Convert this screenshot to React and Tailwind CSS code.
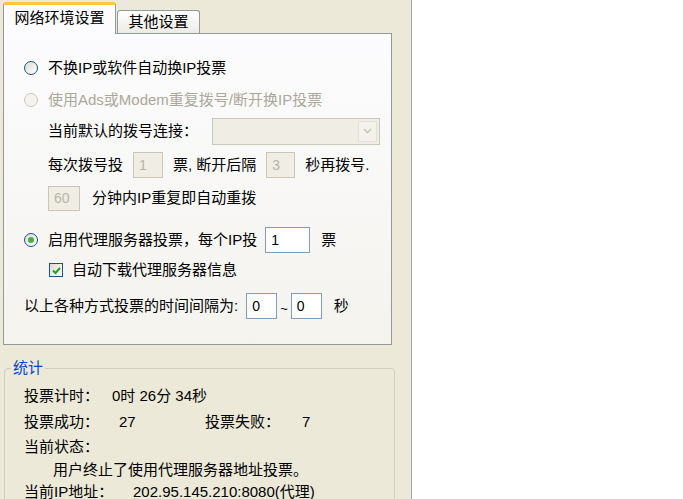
import React from "react";

const font = { fontFamily: '"Liberation Sans", "Noto Sans CJK SC", sans-serif' };

const Radio = ({ checked, disabled }) => (
  <span
    className={`relative inline-block w-[14px] h-[14px] rounded-full border shrink-0 ${
      disabled
        ? "border-[#CAC8BB] bg-[#F4F3EE]"
        : "border-[#1C5180] bg-gradient-to-br from-[#DCDBD3] to-[#FFFFFF]"
    }`}
  >
    {checked && (
      <span className="absolute left-[3px] top-[3px] w-[6px] h-[6px] rounded-full bg-[#4DA94D]" />
    )}
  </span>
);

const Check = () => (
  <span className="inline-flex items-center justify-center w-[14px] h-[14px] border border-[#1C5180] bg-gradient-to-br from-[#DCDBD3] to-[#FFFFFF] shrink-0">
    <svg width="9" height="9" viewBox="0 0 9 9">
      <path d="M1 4.5 L3.5 7 L8 2" stroke="#21A121" strokeWidth="2" fill="none" />
    </svg>
  </span>
);

const Box = ({ value, w, h = 26, disabled }) => (
  <span
    className={`inline-flex items-center pl-[5px] border text-[14px] leading-none ${
      disabled
        ? "border-[#C9C7BA] bg-[#EFEDE4] text-[#B8B6A8]"
        : "border-[#7F9DB9] bg-white text-black"
    }`}
    style={{ width: w, height: h }}
  >
    {value}
  </span>
);

export default function App() {
  return (
    <div className="flex w-[683px] h-[499px] bg-white overflow-hidden text-[15px] text-black" style={font}>
      <div className="relative w-[412px] h-[499px] bg-[#ECE9D8] border-r border-[#A5A5A5] shrink-0">
        {/* tabs */}
        <div className="flex h-[33px] items-end pl-[3px]">
          <div className="relative z-10 w-[113px] h-[32px] bg-[#FCFCFE] border border-b-0 border-[#919B9C] rounded-t-[3px] border-t-[3px] border-t-[#FFC83C] flex items-center justify-center -mb-px">
            <span className="text-[15px] pb-[2px]">网络环境设置</span>
          </div>
          <div className="w-[83px] h-[23px] ml-[1px] bg-gradient-to-b from-[#FFFFFF] to-[#ECEBE6] border border-b-0 border-[#919B9C] rounded-t-[3px] flex items-center justify-center">
            <span className="text-[15px]">其他设置</span>
          </div>
        </div>

        {/* tab page */}
        <div className="ml-[3px] w-[389px] h-[312px] border border-[#919B9C] bg-gradient-to-b from-[#FCFCFE] to-[#F4F3EE] flex flex-col">
          <div className="mt-[19px] h-[30px] flex items-center pl-[20px]">
            <Radio />
            <span className="ml-[10px]">不换IP或软件自动换IP投票</span>
          </div>
          <div className="mt-[2px] h-[30px] flex items-center pl-[20px] text-[#ACA899]">
            <Radio disabled />
            <span className="ml-[10px]">使用Ads或Modem重复拨号/断开换IP投票</span>
          </div>
          <div className="mt-[2px] h-[28px] flex items-center pl-[44px]">
            <span className="w-[164px]">当前默认的拨号连接：</span>
            <span className="flex w-[168px] h-[27px] border border-[#C9C7BA] bg-[#EFEDE4] items-center justify-end pr-[2px]">
              <span className="w-[19px] h-[21px] border border-[#E3E1D6] bg-[#F3F2EC] flex items-center justify-center">
                <svg width="9" height="6" viewBox="0 0 9 6">
                  <path d="M1 1 L4.5 4.5 L8 1" stroke="#C9C7BA" strokeWidth="1.6" fill="none" />
                </svg>
              </span>
            </span>
          </div>
          <div className="mt-[6px] h-[28px] flex items-center pl-[44px]">
            <span>每次拨号投</span>
            <span className="ml-[10px]"><Box value="1" w={30} disabled /></span>
            <span className="ml-[10px]">票, 断开后隔</span>
            <span className="ml-[10px]"><Box value="3" w={29} disabled /></span>
            <span className="ml-[10px]">秒再拨号.</span>
          </div>
          <div className="mt-[6px] h-[26px] flex items-center pl-[44px]">
            <Box value="60" w={32} h={25} disabled />
            <span className="ml-[12px]">分钟内IP重复即自动重拨</span>
          </div>
          <div className="mt-[15px] h-[28px] flex items-center pl-[20px]">
            <Radio checked />
            <span className="ml-[10px]">启用代理服务器投票，每个IP投</span>
            <span className="ml-[8px]"><Box value="1" w={45} /></span>
            <span className="ml-[11px]">票</span>
          </div>
          <div className="mt-[4px] h-[24px] flex items-center pl-[45px]">
            <Check />
            <span className="ml-[9px]">自动下载代理服务器信息</span>
          </div>
          <div className="mt-[10px] h-[28px] flex items-center pl-[20px]">
            <span>以上各种方式投票的时间间隔为:</span>
            <span className="ml-[8px]"><Box value="0" w={31} /></span>
            <span className="mx-[3px] text-[13px] pt-[6px]">~</span>
            <Box value="0" w={31} />
            <span className="ml-[12px]">秒</span>
          </div>
        </div>

        {/* stats group */}
        <div className="relative ml-[4px] mt-[23px] w-[391px] h-[160px] border border-[#D0D0BF] rounded-[4px]">
          <span className="absolute left-[6px] -top-[11px] px-[2px] bg-[#ECE9D8] text-[#0046D5] leading-[20px]">统计</span>
          <div className="pl-[19px] pt-[15px] flex flex-col">
            <div className="h-[24px] flex items-center">
              <span className="w-[88px]">投票计时：</span>
              <span>0时 26分 34秒</span>
            </div>
            <div className="mt-[2px] h-[24px] flex items-center">
              <span className="w-[95px]">投票成功：</span>
              <span className="w-[86px]">27</span>
              <span className="w-[97px]">投票失败：</span>
              <span>7</span>
            </div>
            <div className="mt-[1px] h-[24px] flex items-center">当前状态：</div>
            <div className="h-[23px] flex items-center pl-[29px]">用户终止了使用代理服务器地址投票。</div>
            <div className="h-[21px] flex items-center">
              <span className="w-[109px]">当前IP地址：</span>
              <span>202.95.145.210:8080(代理)</span>
            </div>
          </div>
        </div>
      </div>
      <div className="flex-1 bg-white" />
    </div>
  );
}
